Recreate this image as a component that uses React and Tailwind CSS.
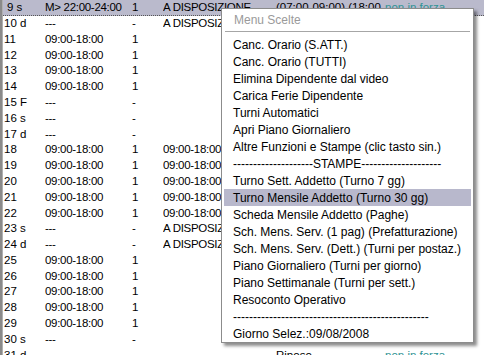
import React from 'react'

const rows = [
  { n: '9 s', t: 'M> 22:00-24:00', q: '1', d: 'A DISPOSIZIONE', e: '(07:00-09:00) (18:00-24:00)', f: 'non in forza', sel: true },
  { n: '10 d', t: '---', q: '-', d: 'A DISPOSIZIONE' },
  { n: '11', t: '09:00-18:00', q: '1' },
  { n: '12', t: '09:00-18:00', q: '1' },
  { n: '13', t: '09:00-18:00', q: '1' },
  { n: '14', t: '09:00-18:00', q: '1' },
  { n: '15 F', t: '---', q: '-' },
  { n: '16 s', t: '---', q: '-' },
  { n: '17 d', t: '---', q: '-' },
  { n: '18', t: '09:00-18:00', q: '1', d: '09:00-18:00' },
  { n: '19', t: '09:00-18:00', q: '1', d: '09:00-18:00' },
  { n: '20', t: '09:00-18:00', q: '1', d: '09:00-18:00' },
  { n: '21', t: '09:00-18:00', q: '1', d: '09:00-18:00' },
  { n: '22', t: '09:00-18:00', q: '1', d: '09:00-18:00' },
  { n: '23 s', t: '---', q: '-', d: 'A DISPOSIZIONE' },
  { n: '24 d', t: '---', q: '-', d: 'A DISPOSIZIONE' },
  { n: '25', t: '09:00-18:00', q: '1' },
  { n: '26', t: '09:00-18:00', q: '1' },
  { n: '27', t: '09:00-18:00', q: '1' },
  { n: '28', t: '09:00-18:00', q: '1' },
  { n: '29', t: '09:00-18:00', q: '1' },
  { n: '30 s', t: '---', q: '-', e: 'RIPOSO SETTIMANALE', f: 'non in forza' },
  { n: '31 d', t: '---', q: '-', e: 'Riposo', f: 'non in forza' },
]

const items = [
  'Canc. Orario (S.ATT.)',
  'Canc. Orario (TUTTI)',
  'Elimina Dipendente dal video',
  'Carica Ferie Dipendente',
  'Turni Automatici',
  'Apri Piano Giornaliero',
  'Altre Funzioni e Stampe (clic tasto sin.)',
  '--------------------STAMPE--------------------',
  'Turno Sett. Addetto (Turno 7 gg)',
  'Turno Mensile Addetto (Turno 30 gg)',
  'Scheda Mensile Addetto (Paghe)',
  'Sch. Mens. Serv. (1 pag) (Prefatturazione)',
  'Sch. Mens. Serv. (Dett.) (Turni per postaz.)',
  'Piano Giornaliero (Turni per giorno)',
  'Piano Settimanale (Turni per sett.)',
  'Resoconto Operativo',
  '-------------------------------------------------',
  'Giorno Selez.:09/08/2008',
]

export default function App() {
  return (
    <div className="relative w-[484px] h-[355px] overflow-hidden bg-white text-black font-['Liberation_Sans',Arial,sans-serif]">
      <div className="flex h-full">
        <div className="w-[3px] shrink-0 bg-[#8a8a8a] border-r border-[#b0b0b0]" />
        <div className="flex flex-col flex-1">
          {rows.map((r) => (
            <div
              key={r.n}
              className={
                'flex items-center h-[15.8px] shrink-0 text-[11.5px] leading-none whitespace-nowrap ' +
                (r.sel ? 'bg-[#babacc] border-b border-dotted border-[#555]' : '')
              }
            >
              <span className={'w-[42px] shrink-0 ' + (r.sel ? 'pl-[4px]' : 'pl-[1px]')}>{r.n}</span>
              <span className="w-[87px] shrink-0 tracking-[-0.3px]">{r.t}</span>
              <span className="w-[31px] shrink-0">{r.q}</span>
              <span className="w-[113px] shrink-0 overflow-hidden tracking-[-0.3px]">{r.d || ''}</span>
              <span className="w-[109px] shrink-0 overflow-hidden">{r.e || ''}</span>
              <span className="text-[#2f9494]">{r.f || ''}</span>
            </div>
          ))}
        </div>
      </div>

      <div className="absolute left-[221px] top-[8px] w-[253px] h-[335px] bg-white border border-[#8c8c8c] shadow-[3px_3px_3px_rgba(0,0,0,0.45)] px-[2px] pt-[2px] text-[12px] leading-none whitespace-nowrap">
        <div className="h-[17px] flex items-center pl-[10px] text-[#9a9a9a]">Menu Scelte</div>
        <div className="mt-[3px] mx-[1px] h-px bg-[#a6a6a6]" />
        <div className="mt-[4px] flex flex-col">
          {items.map((it, i) => (
            <div
              key={i}
              className={'h-[17px] flex items-center pl-[9px] ' + (i === 9 ? 'bg-[#b8b8cc]' : '')}
            >
              {it}
            </div>
          ))}
        </div>
      </div>
    </div>
  )
}
